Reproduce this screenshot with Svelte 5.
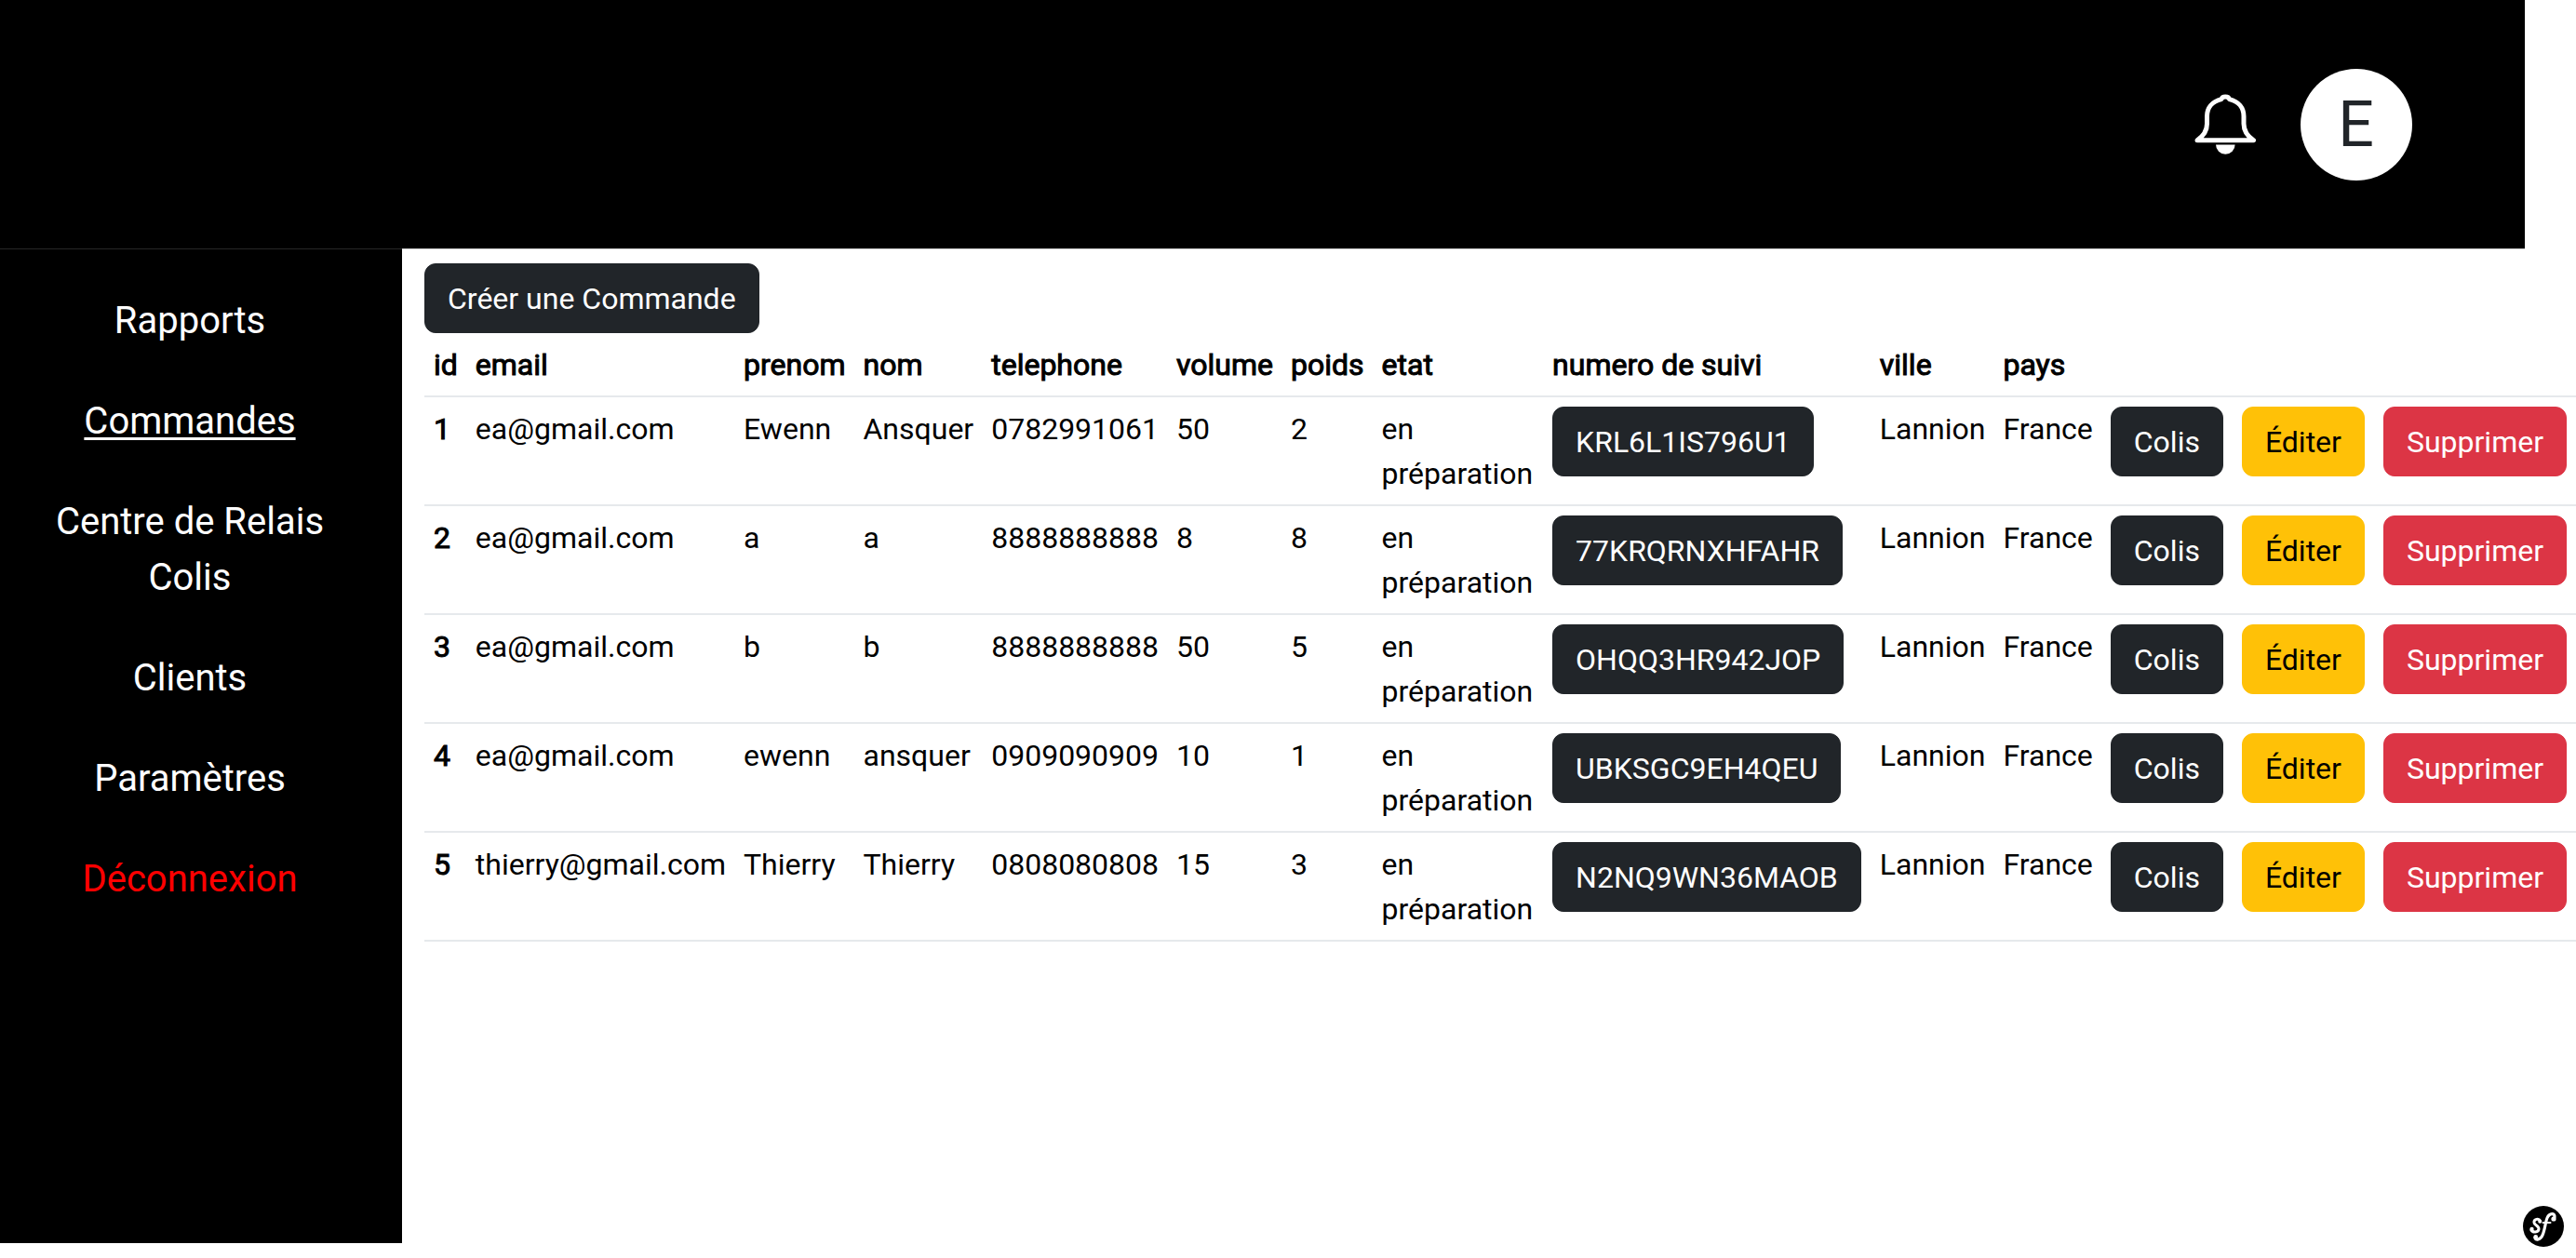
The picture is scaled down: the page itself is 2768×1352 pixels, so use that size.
<script>
  const links = [
    { label: 'Rapports' },
    { label: 'Commandes', current: true },
    { label: 'Centre de Relais Colis' },
    { label: 'Clients' },
    { label: 'Paramètres' },
    { label: 'Déconnexion', danger: true },
  ];

  const columns = ['id', 'email', 'prenom', 'nom', 'telephone', 'volume', 'poids', 'etat', 'numero de suivi', 'ville', 'pays'];

  const etat = 'en préparation';
  const ville = 'Lannion';
  const pays = 'France';
  const orders = [
    { id: 1, email: 'ea@gmail.com', prenom: 'Ewenn', nom: 'Ansquer', telephone: '0782991061', volume: 50, poids: 2, suivi: 'KRL6L1IS796U1' },
    { id: 2, email: 'ea@gmail.com', prenom: 'a', nom: 'a', telephone: '8888888888', volume: 8, poids: 8, suivi: '77KRQRNXHFAHR' },
    { id: 3, email: 'ea@gmail.com', prenom: 'b', nom: 'b', telephone: '8888888888', volume: 50, poids: 5, suivi: 'OHQQ3HR942JOP' },
    { id: 4, email: 'ea@gmail.com', prenom: 'ewenn', nom: 'ansquer', telephone: '0909090909', volume: 10, poids: 1, suivi: 'UBKSGC9EH4QEU' },
    { id: 5, email: 'thierry@gmail.com', prenom: 'Thierry', nom: 'Thierry', telephone: '0808080808', volume: 15, poids: 3, suivi: 'N2NQ9WN36MAOB' },
  ];
</script>

<div class="page">
  <header class="topbar">
    <button class="bell" aria-label="Notifications">
      <svg viewBox="0 0 66 66" width="66" height="66" aria-hidden="true">
        <path
          d="M3 49.8C10 45 13.5 40 13.5 32V24C13.5 15 19 8 29 5.6C30 2.2 36.5 2.2 37.5 5.6C47.5 8 53 15 53 24V32C53 40 56.5 45 63.5 49.8Z"
          fill="none" stroke="#fff" stroke-width="5" stroke-linejoin="round" />
        <path d="M23 54.5H43.6A10.3 10.3 0 0 1 23 54.5Z" fill="#fff" />
      </svg>
    </button>
    <button class="avatar" aria-label="Profil">E</button>
  </header>

  <div class="body">
    <nav class="sidebar">
      <ul>
        {#each links as link}
          <li>
            <a href="#top" class:current={link.current} class:danger={link.danger}>{link.label}</a>
          </li>
        {/each}
      </ul>
    </nav>

    <main class="content">
      <button class="btn dark">Créer une Commande</button>
      <table>
        <thead>
          <tr>
            {#each columns as column}
              <th scope="col">{column}</th>
            {/each}
            <td></td>
            <td></td>
            <td></td>
          </tr>
        </thead>
        <tbody>
          {#each orders as order}
            <tr>
              <th scope="row">{order.id}</th>
              <td>{order.email}</td>
              <td>{order.prenom}</td>
              <td>{order.nom}</td>
              <td>{order.telephone}</td>
              <td>{order.volume}</td>
              <td>{order.poids}</td>
              <td>{etat}</td>
              <td class="action"><button class="btn dark">{order.suivi}</button></td>
              <td>{ville}</td>
              <td>{pays}</td>
              <td class="action"><button class="btn dark">Colis</button></td>
              <td class="action"><button class="btn warning">Éditer</button></td>
              <td class="action"><button class="btn delete">Supprimer</button></td>
            </tr>
          {/each}
        </tbody>
      </table>
    </main>
  </div>

  <button class="toolbar" aria-label="Symfony">
    <svg viewBox="0 0 44 44" width="44" height="44" aria-hidden="true">
      <circle cx="22" cy="22" r="22" fill="#000" />
      <g fill="none" stroke="#fff" stroke-linecap="round">
        <path d="M18.5 16C17 13 11.5 14 12 18C12.5 21 17.5 21.5 17 25C16.5 28.5 10.5 29 9 26" stroke-width="3" />
        <path d="M34 12C34.5 7.5 28.5 7 26 13C24 18 23.5 26 21 31.5C19 36.500 13 37.5 13 34" stroke-width="3.2" />
        <path d="M21.5 18H29.5" stroke-width="2" />
      </g>
      <g fill="#fff">
        <circle cx="18.2" cy="16.7" r="2" />
        <circle cx="9.5" cy="25" r="2.2" />
        <circle cx="33" cy="14" r="2.6" />
        <circle cx="13.7" cy="33.5" r="2.4" />
      </g>
    </svg>
  </button>
</div>

<style>
  :global(body) {
    overflow: hidden;
    background: #fff;
  }

  .page {
    display: flex;
    flex-direction: column;
    box-sizing: border-box;
    min-height: 100vh;
    padding-bottom: 16px;
    color: #000;
    font-family: Roboto, 'Liberation Sans', sans-serif;
    font-size: 32px;
    line-height: 48px;
  }

  button {
    font: inherit;
    cursor: pointer;
  }

  .topbar {
    display: flex;
    align-items: center;
    justify-content: flex-end;
    gap: 48px;
    box-sizing: border-box;
    width: 98%;
    height: 268px;
    padding-right: 121px;
    border-bottom: 1px solid #ccc;
    background: #000;
  }

  .bell {
    display: flex;
    padding: 0;
    border: 0;
    background: none;
  }

  .avatar {
    width: 120px;
    height: 120px;
    padding: 0;
    border: 0;
    border-radius: 50%;
    background: #fff;
    color: #212529;
    font-size: 68px;
  }

  .body {
    display: flex;
    flex: 1;
    margin-top: -1px;
  }

  .sidebar {
    flex: none;
    box-sizing: border-box;
    width: 432px;
    padding: 47px 40px 47px 16px;
    border-top: 1px solid #262626;
    background: #000;
    font-size: 40px;
    line-height: 60px;
    text-align: center;
  }

  .sidebar ul {
    display: flex;
    flex-direction: column;
    gap: 48px;
    margin: 0;
    padding: 0;
    list-style: none;
  }

  .sidebar a {
    color: #fff;
    text-decoration: none;
  }

  .sidebar a.current {
    text-decoration: underline;
    text-decoration-thickness: 3px;
    text-underline-offset: 4px;
  }

  .sidebar a.danger {
    color: #f00;
  }

  .content {
    flex: 1;
    min-width: 0;
    padding: 16px 0 0 24px;
  }

  .btn {
    display: block;
    padding: 13px 24px 12px;
    border: 1px solid transparent;
    border-radius: 12px;
    color: #fff;
    white-space: nowrap;
  }

  .dark {
    border-color: #212529;
    background: #212529;
  }

  .warning {
    border-color: #ffc107;
    background: #ffc107;
    color: #000;
  }

  .delete {
    border-color: #dc3545;
    background: #dc3545;
  }

  table {
    width: 100%;
    border-collapse: separate;
    border-spacing: 0;
  }

  th,
  td {
    padding: 10px 9px 9px 10px;
    border-bottom: 2px solid #e6e9ec;
    text-align: left;
    vertical-align: top;
  }

  .action {
    padding-right: 10px;
  }

  th {
    font-weight: 400;
    -webkit-text-stroke: 1px #000;
  }

  .toolbar {
    position: fixed;
    right: 13px;
    bottom: 12px;
    display: flex;
    padding: 0;
    border: 0;
    background: none;
  }
</style>
